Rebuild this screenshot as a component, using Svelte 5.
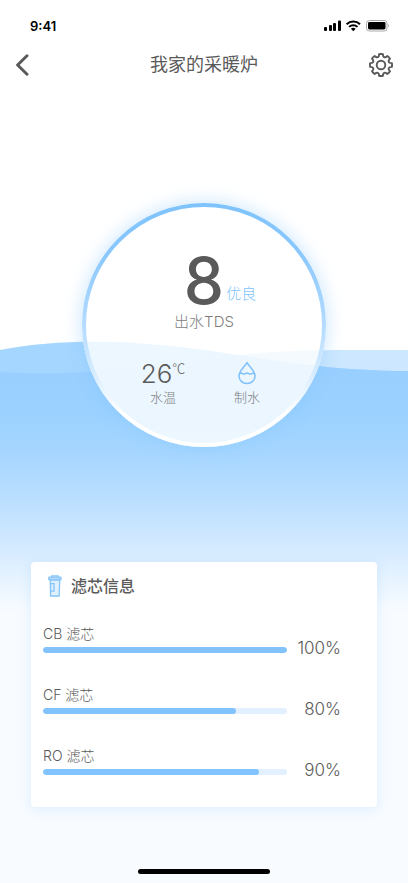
<script lang="ts">
    type Filter = { id: string; name: string; left: number; level: number };

    let { title = '我家的采暖炉' }: { title?: string } = $props();

    let tds = $state(8);
    let temperature = $state(26);
    let filters = $state<Filter[]>([
        { id: 'cb', name: 'CB 滤芯', left: 100, level: 100 },
        { id: 'cf', name: 'CF 滤芯', left: 80, level: 79 },
        { id: 'ro', name: 'RO 滤芯', left: 90, level: 88.5 }
    ]);

    let quality = $derived(tds <= 50 ? '优良' : '一般');

    // Outline of one gear: eight rounded teeth around the hub
    const gearPath = () => {
        const at = (deg: number, radius: number) => {
            const angle = (deg * Math.PI) / 180;
            return `${(12 + radius * Math.sin(angle)).toFixed(2)} ${(12 - radius * Math.cos(angle)).toFixed(2)}`;
        };
        let path = `M${at(-10, 11)}`;
        for (let deg = 0; deg < 360; deg += 45) {
            path += `Q${at(deg, 11.3)} ${at(deg + 10, 11)}`;
            path += `L${at(deg + 13, 9.4)}Q${at(deg + 22.5, 7.6)} ${at(deg + 32, 9.4)}L${at(deg + 35, 11)}`;
        }
        return path + 'Z';
    };
</script>

<div class="page">
    <svg class="water" viewBox="0 0 408 270" preserveAspectRatio="none" aria-hidden="true">
        <defs>
            <linearGradient id="depth" gradientUnits="userSpaceOnUse" x1="0" y1="0" x2="0" y2="270">
                <stop offset="0.1" stop-color="#99cfff" />
                <stop offset="0.26" stop-color="#9ad1ff" />
                <stop offset="0.42" stop-color="#a6d6ff" />
                <stop offset="0.58" stop-color="#b9deff" />
                <stop offset="0.77" stop-color="#d4eaff" />
                <stop offset="0.88" stop-color="#e6f3ff" />
                <stop offset="1" stop-color="#f7fbff" />
            </linearGradient>
            <clipPath id="frontWave">
                <path d="M0 10C50 0 110 0 160 5C230 10 300 31 408 31V270H0Z" />
            </clipPath>
        </defs>
        <path fill="#cce7ff" d="M0 32C90 38 180 22 240 15C290 9 350 10 408 10V50H0Z" />
        <path fill="#a5d6ff" d="M0 10C50 0 110 0 160 5C230 10 300 31 408 31V50H0Z" />
        <path fill="url(#depth)" clip-path="url(#frontWave)" d="M0 32C90 38 180 22 240 15C290 9 350 10 408 10V270H0Z" />
    </svg>

    <div class="status">
        <span class="time">9:41</span>
        <svg width="66" height="12" viewBox="0 0 66 12" aria-hidden="true">
            <rect x="0" y="7" width="3" height="4" rx="1" />
            <rect x="5" y="5" width="3" height="6" rx="1" />
            <rect x="9" y="3" width="3" height="8" rx="1" />
            <rect x="14" y="0.5" width="3" height="10.5" rx="1" />
            <g fill="none" stroke="#000" stroke-width="2">
                <path d="M22.6 4.2a9.6 9.6 0 0 1 13.4 0" />
                <path d="M25.1 6.9a6 6 0 0 1 8.4 0" />
            </g>
            <path d="M26.9 8.8a3.5 3.5 0 0 1 4.8 0L29.3 11.2z" />
            <rect x="42.5" y="0.5" width="20.5" height="10.5" rx="2.8" fill="none" stroke="#aaa" />
            <rect x="44" y="2" width="17.5" height="7.5" rx="1.4" />
            <path d="M64.3 4v3.6c1.3-.6 1.3-3 0-3.6z" fill="#aaa" />
        </svg>
    </div>

    <header>
        <button type="button" aria-label="返回">
            <svg width="14" height="22" viewBox="0 0 14 22"><path d="M12 1.8L2.6 11L12 20.2" fill="none" stroke="#5a5a5a" stroke-width="3" stroke-linecap="round" stroke-linejoin="round" /></svg>
        </button>
        <h1>{title}</h1>
        <button type="button" aria-label="设置">
            <svg width="24" height="24" viewBox="0 0 24 24" fill="none" stroke="#5a5a5a" stroke-width="1.9" stroke-linejoin="round">
                <path d={gearPath()} />
                <circle cx="12" cy="12" r="4.3" />
            </svg>
        </button>
    </header>

    <main>
        <section class="dial">
            <svg class="ring" viewBox="0 0 244 244" aria-hidden="true">
                <defs>
                    <linearGradient id="rim" x1="0" y1="0" x2="0" y2="1">
                        <stop offset="0" stop-color="#7fc3fc" />
                        <stop offset="0.2" stop-color="#8ac8fd" />
                        <stop offset="0.5" stop-color="#b4dbff" />
                        <stop offset="0.7" stop-color="#d6ecff" />
                        <stop offset="0.87" stop-color="#fff" />
                    </linearGradient>
                </defs>
                <circle cx="122" cy="122" r="120" fill="none" stroke="url(#rim)" stroke-width="4" />
            </svg>
            <div class="reading">
                <strong>{tds}</strong>
                <span class="quality">{quality}</span>
            </div>
            <p class="caption">出水TDS</p>
            <div class="stats">
                <div class="stat">
                    <div class="value">{temperature}<sup>℃</sup></div>
                    <div class="name">水温</div>
                </div>
                <div class="stat">
                    <div class="value">
                        <svg width="18" height="24" viewBox="0 0 18 24" fill="none" stroke="#7fc1fb" stroke-width="1.5" stroke-linejoin="round">
                            <path d="M9 1.6C6.8 5.4 1 9.8 1 15a8 7.6 0 0 0 16 0C17 9.8 11.2 5.4 9 1.6z" />
                            <path d="M1.6 12.6q1.7-1 2.8 0q1.4 1 3 0q1.6-1 3.2 0q1.6 1 3 0q1.2-.9 2.8 0" />
                        </svg>
                    </div>
                    <div class="name">制水</div>
                </div>
            </div>
        </section>

        <section class="card">
            <h2>
                <svg width="14" height="22" viewBox="0 0 14 22" fill="#dff0ff" stroke="#86c4f9" stroke-width="1.3" aria-hidden="true">
                    <path d="M2.3 4.8h9.4L11.2 21H2.6z" />
                    <path d="M3.8 2.2V.8h6.4v1.4" />
                    <rect x="0.8" y="2.2" width="12.2" height="2.6" rx="0.6" fill="#b3dafc" />
                    <path d="M2.6 8.6h3.4v7.6H2.6z" />
                </svg>
                滤芯信息
            </h2>
            {#each filters as filter (filter.id)}
                <div class="filter">
                    <label for={filter.id}>{filter.name}</label>
                    <div class="level">
                        <progress id={filter.id} max="100" value={filter.level}></progress>
                        <span>{filter.left}%</span>
                    </div>
                </div>
            {/each}
        </section>
    </main>

    <div class="home"></div>
</div>

<style>
    :global(body) {
        margin: 0;
        background: #f8fbff;
    }

    .page {
        position: relative;
        display: flex;
        flex-direction: column;
        box-sizing: border-box;
        min-height: 100vh;
        overflow: hidden;
        background: linear-gradient(#fff 0, #fff 400px, #f8fbff 600px);
        font-family: Inter, 'Noto Sans CJK SC', sans-serif;
        color: #5a5a5a;
    }

    .water {
        position: absolute;
        top: 340px;
        left: 0;
        width: 100%;
        height: 270px;
    }

    .status {
        display: flex;
        align-items: center;
        justify-content: space-between;
        height: 18px;
        padding: 17px 18px 0 30px;
        color: #000;
    }

    .time {
        font-size: 13px;
        font-weight: 600;
    }

    header {
        display: flex;
        align-items: center;
        justify-content: space-between;
        height: 28px;
        padding: 16px 15px 0;
    }

    button {
        display: flex;
        width: 24px;
        padding: 0;
        border: none;
        background: none;
        cursor: pointer;
    }

    h1 {
        margin: 0;
        font-size: 18px;
        font-weight: 400;
        line-height: 30px;
    }

    main {
        position: relative;
        display: flex;
        flex-direction: column;
        align-items: center;
        gap: 115px;
        padding: 124px 31px 0;
    }

    .dial {
        position: relative;
        display: flex;
        flex-direction: column;
        align-items: center;
        box-sizing: border-box;
        width: 244px;
        height: 244px;
        padding-top: 46px;
        border-radius: 50%;
        background: rgba(255, 255, 255, 0.8);
        box-shadow: 0 0 18px rgba(127, 195, 252, 0.45);
    }

    .ring {
        position: absolute;
        inset: 0;
    }

    .reading {
        display: grid;
        grid-template-columns: 1fr auto 1fr;
        align-items: end;
        column-gap: 2px;
        height: 64px;
    }

    .reading strong {
        grid-column: 2;
        font-size: 64px;
        font-weight: 500;
        line-height: 64px;
    }

    .quality {
        padding-bottom: 8px;
        font-size: 15px;
        font-weight: 300;
        line-height: 22px;
        color: #7fc3fc;
    }

    .caption {
        margin: 0;
        font-size: 15px;
        font-weight: 300;
        line-height: 18px;
        color: #7c7c7c;
    }

    .stats {
        display: grid;
        grid-template-columns: 84px 84px;
        margin-top: 30px;
        padding-left: 2px;
    }

    .stat {
        display: flex;
        flex-direction: column;
        align-items: center;
    }

    .value {
        display: flex;
        height: 26px;
        font-size: 26px;
        font-weight: 300;
        line-height: 26px;
    }

    sup {
        font-family: 'Noto Sans CJK SC', sans-serif;
        font-size: 13px;
        line-height: 13px;
    }

    .name {
        font-size: 13px;
        font-weight: 300;
        line-height: 20px;
        color: #7c7c7c;
    }

    .card {
        box-sizing: border-box;
        width: 100%;
        min-height: 245px;
        padding: 12px 36px 0 12px;
        border-radius: 4px;
        background: #fff;
        box-shadow: 0 2px 12px rgba(150, 205, 255, 0.3);
    }

    h2 {
        display: flex;
        align-items: center;
        gap: 9px;
        margin: 0 0 26px;
        padding-left: 5px;
        font-size: 16px;
        font-weight: 500;
        line-height: 24px;
    }

    .filter {
        height: 61px;
    }

    label {
        display: block;
        font-size: 14px;
        font-weight: 300;
        line-height: 20px;
    }

    .level {
        display: flex;
        align-items: center;
        gap: 10px;
        height: 12px;
    }

    progress {
        flex: 1;
        min-width: 0;
        height: 6px;
        appearance: none;
        border: none;
        border-radius: 3px;
        overflow: hidden;
        background: #e2f0ff;
    }

    progress::-webkit-progress-bar {
        background: #e2f0ff;
    }

    progress::-webkit-progress-value {
        border-radius: 3px;
        background: #82c3fe;
    }

    .level span {
        width: 44px;
        padding-bottom: 4px;
        font-size: 17px;
        font-weight: 300;
        text-align: right;
    }

    .home {
        position: relative;
        width: 132px;
        height: 5px;
        margin: auto auto 9px;
        border-radius: 3px;
        background: #000;
    }
</style>
